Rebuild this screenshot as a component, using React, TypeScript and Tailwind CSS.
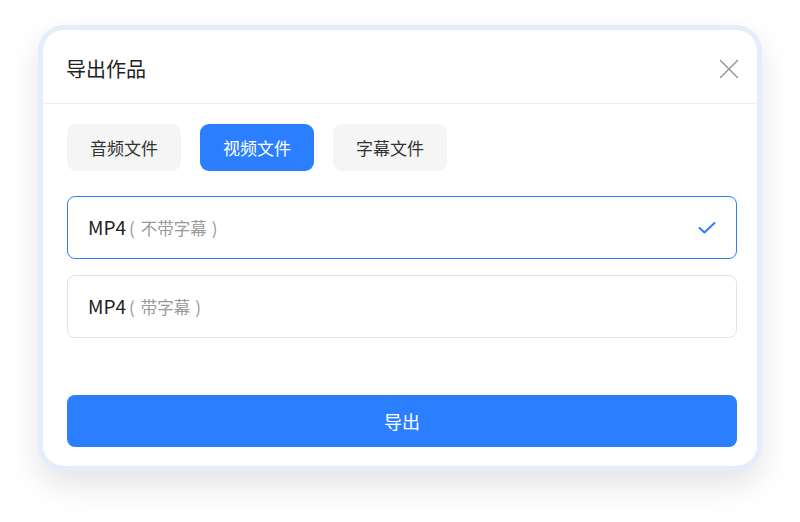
import React from "react";

const font = { fontFamily: '"Noto Sans CJK SC", "Noto Sans", sans-serif' };

function Option({ sub, selected }: { sub: string; selected: boolean }) {
  return (
    <div
      className={
        selected
          ? "h-[63px] rounded-[8px] border border-[#2b7fff] flex items-center justify-between pl-[20px] pr-[20px]"
          : "h-[63px] rounded-[8px] border border-[#e2e2e2] flex items-center justify-between pl-[20px] pr-[20px]"
      }
    >
      <div className="flex items-baseline">
        <span className="text-[19px] text-[#222]">MP4</span>
        <span className="text-[17px] text-[#999] ml-[3px]">(</span>
        <span className="text-[16.5px] text-[#999] ml-[6px]">{sub}</span>
        <span className="text-[17px] text-[#999] ml-[5px]">)</span>
      </div>
      {selected && (
        <svg width="18" height="14" viewBox="0 0 18 14">
          <path d="M1.5 7 L6.5 11.5 L16.5 2" fill="none" stroke="#2b7fff" strokeWidth="2" strokeLinecap="round" strokeLinejoin="round" />
        </svg>
      )}
    </div>
  );
}

export default function App() {
  const tabs = [
    { label: "音频文件", active: false },
    { label: "视频文件", active: true },
    { label: "字幕文件", active: false },
  ];
  return (
    <div className="w-[800px] h-[522px] bg-white pt-[25px] pl-[38px]" style={font}>
      <div className="w-[724px] h-[446px] rounded-[26px] border-[5px] border-[#e5edfd] bg-white shadow-[0_14px_32px_rgba(0,0,0,0.11)] flex flex-col overflow-hidden">
        <div className="h-[74px] flex items-center justify-between pl-[23px] pr-[18px] border-b border-[#ececec] shrink-0">
          <span className="text-[20px] text-[#222] pt-[4px]">导出作品</span>
          <svg width="20" height="20" viewBox="0 0 20 20" className="mt-[4px]">
            <path d="M1.5 1.5 L18.5 18.5 M18.5 1.5 L1.5 18.5" stroke="#9a9a9a" strokeWidth="1.6" strokeLinecap="round" />
          </svg>
        </div>
        <div className="flex flex-col pl-[24px] pr-[20px] pt-[20px] pb-[19px] flex-1">
          <div className="flex gap-[19px]">
            {tabs.map((t) => (
              <div
                key={t.label}
                className={
                  t.active
                    ? "w-[114px] h-[47px] rounded-[9px] bg-[#2b7fff] text-white text-[17px] flex items-center justify-center"
                    : "w-[114px] h-[47px] rounded-[9px] bg-[#f5f5f5] text-[#333] text-[17px] flex items-center justify-center"
                }
              >
                {t.label}
              </div>
            ))}
          </div>
          <div className="mt-[25px]">
            <Option sub="不带字幕" selected={true} />
          </div>
          <div className="mt-[16px]">
            <Option sub="带字幕" selected={false} />
          </div>
          <div className="mt-auto h-[52px] rounded-[8px] bg-[#2b7fff] text-white text-[18px] flex items-center justify-center">
            导出
          </div>
        </div>
      </div>
    </div>
  );
}
